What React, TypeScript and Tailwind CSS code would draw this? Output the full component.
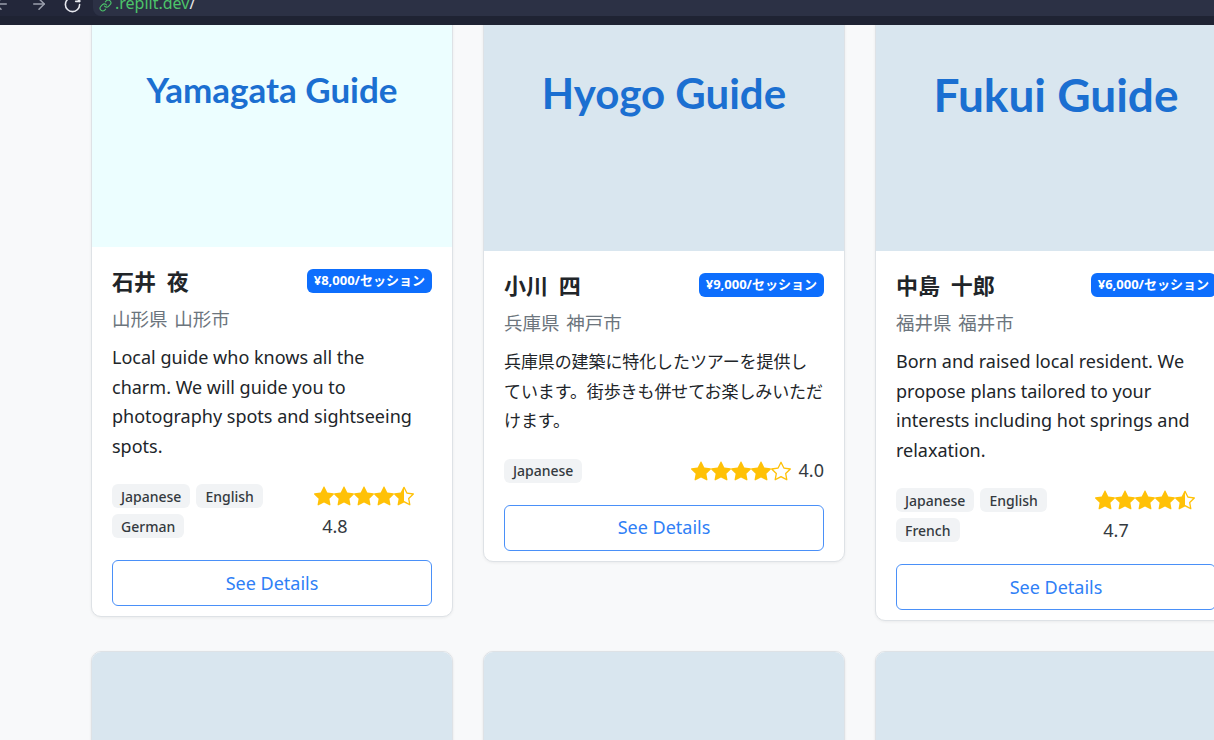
import { ArrowLeft, ArrowRight, RotateCw, Link } from "lucide-react";
import { BsStarFill, BsStarHalf, BsStar } from "react-icons/bs";

type Guide = {
  title: string;
  titleClass: string;
  imageClass: string;
  name: string;
  price: string;
  location: string;
  description: string;
  descClass: string;
  languages: string[];
  rating: number;
};

const guides: Guide[] = [
  {
    title: "Yamagata Guide",
    titleClass: "text-[35px]",
    imageClass: "h-[236px] bg-[#ecfeff]",
    name: "石井 夜",
    price: "¥8,000/セッション",
    location: "山形県 山形市",
    description:
      "Local guide who knows all the charm. We will guide you to photography spots and sightseeing spots.",
    descClass: "text-[18px] max-w-[314px]",
    languages: ["Japanese", "English", "German"],
    rating: 4.8,
  },
  {
    title: "Hyogo Guide",
    titleClass: "text-[42px]",
    imageClass: "h-[240px] bg-[#d9e6ef]",
    name: "小川 四",
    price: "¥9,000/セッション",
    location: "兵庫県 神戸市",
    description:
      "兵庫県の建築に特化したツアーを提供し\nています。街歩きも併せてお楽しみいただ\nけます。",
    descClass: "text-[17px] tracking-[-0.1px] whitespace-pre-line",
    languages: ["Japanese"],
    rating: 4.0,
  },
  {
    title: "Fukui Guide",
    titleClass: "text-[46px]",
    imageClass: "h-[240px] bg-[#d9e6ef]",
    name: "中島 十郎",
    price: "¥6,000/セッション",
    location: "福井県 福井市",
    description:
      "Born and raised local resident. We propose plans tailored to your interests including hot springs and relaxation.",
    descClass: "text-[18px] max-w-[314px]",
    languages: ["Japanese", "English", "French"],
    rating: 4.7,
  },
];

function Stars({ rating }: { rating: number }) {
  const full = Math.floor(rating);
  const frac = rating - full;
  return (
    <span className="flex h-[24px] items-center text-[20px] text-[#ffc107]">
      {[0, 1, 2, 3, 4].map((i) =>
        i < full ? (
          <BsStarFill key={i} />
        ) : i === full && frac > 0 ? (
          <BsStarHalf key={i} />
        ) : (
          <BsStar key={i} />
        )
      )}
    </span>
  );
}

function GuideCard({ g }: { g: Guide }) {
  return (
    <div className="overflow-hidden rounded-[10px] border border-[#dee2e6] bg-white shadow-[0_1px_3px_rgba(0,0,0,0.06)]">
      <div className={`flex justify-center pt-[61px] ${g.imageClass}`}>
        <span
          className={`font-['Lato',sans-serif] font-bold leading-none text-[#1b6fd1] ${g.titleClass}`}
        >
          {g.title}
        </span>
      </div>
      <div className="px-5 pb-[10px] pt-[19px]">
        <div className="flex h-[30px] items-center justify-between">
          <h3 className="text-[22px] font-bold text-[#212529] [word-spacing:5px]">
            {g.name}
          </h3>
          <span className="flex h-[24px] items-center rounded-[6px] bg-[#0d6efd] px-[7px] text-[13px] font-bold text-white">
            {g.price}
          </span>
        </div>
        <p className="mt-[9px] text-[18.5px] leading-[28px] text-[#6c757d] [word-spacing:2px]">
          {g.location}
        </p>
        <p className={`mt-[10px] leading-[29.5px] text-[#212529] ${g.descClass}`}>
          {g.description}
        </p>
        <div className="mt-[23px] flex items-center justify-between">
          <div className="flex flex-wrap gap-[6px]">
            {g.languages.map((l) => (
              <span
                key={l}
                className="flex h-[24px] items-center rounded-[6px] bg-[#f1f3f5] px-[9px] text-[14px] font-medium text-[#343a40]"
              >
                {l}
              </span>
            ))}
          </div>
          <div className="flex flex-wrap items-center gap-y-[6px]">
            <Stars rating={g.rating} />
            <span className="ml-[8px] flex h-[24px] items-center text-[18px] text-[#343a40]">
              {g.rating.toFixed(1)}
            </span>
          </div>
        </div>
        <button className="mt-[22px] h-[46px] w-full rounded-[6px] border border-[#4a90f8] text-[18px] text-[#2f80f6]">
          See Details
        </button>
      </div>
    </div>
  );
}

function EmptyCard() {
  return (
    <div className="overflow-hidden rounded-[10px] border border-[#dee2e6] bg-white shadow-[0_1px_3px_rgba(0,0,0,0.08)]">
      <div className="h-[240px] bg-[#d9e6ef]" />
      <div className="h-[200px]" />
    </div>
  );
}

export default function App() {
  return (
    <div className="h-[740px] w-[1214px] overflow-hidden bg-[#f8f9fa] font-['Noto_Sans','Noto_Sans_CJK_JP',sans-serif]">
      <div className="bg-[#1f2333]">
        <div className="flex h-[16px] items-start bg-[#23273a]">
          <ArrowLeft size={18} className="-ml-[8px] -mt-[5px] text-[#9ca0ad]" />
          <ArrowRight size={18} className="-mt-[5px] ml-[20px] text-[#9ca0ad]" />
          <RotateCw size={19} className="-mt-[5px] ml-[15px] text-[#e6e8ee]" />
          <div className="ml-[11px] flex h-[16px] flex-1 items-start rounded-bl-[8px] bg-[#2c3145] pl-[6px]">
            <Link size={13} className="-mt-[1px] text-[#4cc46a]" />
            <span className="-mt-[7px] ml-[3px] text-[16px] leading-[20px] text-[#4cc46a]">
              .replit.dev<span className="text-[#e8e8e8]">/</span>
            </span>
          </div>
        </div>
        <div className="h-[9px]" />
      </div>
      <main className="h-[715px] overflow-hidden">
        <div className="-mt-[15px] ml-[91px] grid w-[1146px] grid-cols-[362px_362px_362px] items-start gap-[30px]">
          {guides.map((g) => (
            <GuideCard key={g.name} g={g} />
          ))}
          <EmptyCard />
          <EmptyCard />
          <EmptyCard />
        </div>
      </main>
    </div>
  );
}
